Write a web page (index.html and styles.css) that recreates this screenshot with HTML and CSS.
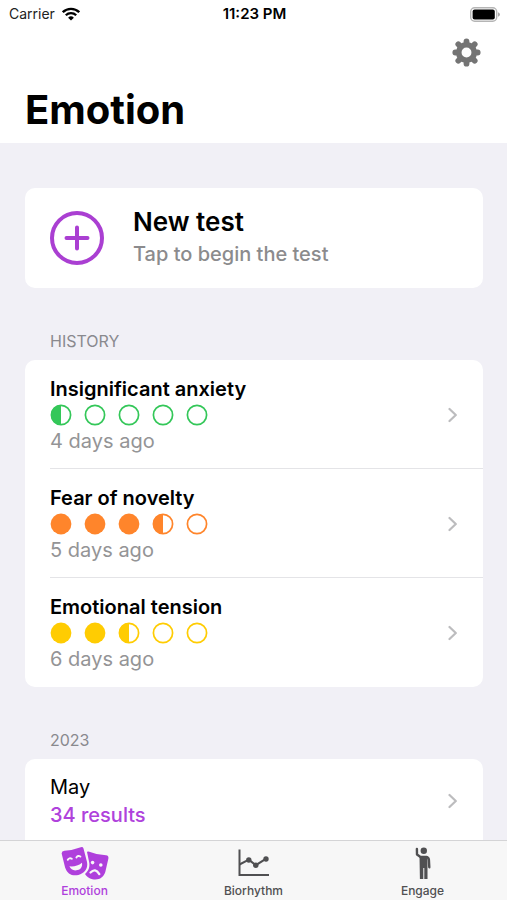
FILE: index.html
```html
<!DOCTYPE html>
<html lang="en">
<head>
<meta charset="utf-8">
<meta name="viewport" content="width=device-width, initial-scale=1">
<title>Emotion</title>
<link rel="stylesheet" href="styles.css">
</head>
<body>
<svg class="defs" aria-hidden="true">
  <symbol id="empty" viewBox="0 0 22 22"><circle cx="11" cy="11" r="9.6" fill="none" stroke="currentColor" stroke-width="1.7"/></symbol>
  <symbol id="half" viewBox="0 0 22 22"><circle cx="11" cy="11" r="9.6" fill="none" stroke="currentColor" stroke-width="1.7"/><path d="M11 1a10 10 0 0 0 0 20z" fill="currentColor"/></symbol>
  <symbol id="full" viewBox="0 0 22 22"><circle cx="11" cy="11" r="10.4" fill="currentColor"/></symbol>
  <symbol id="chevron" viewBox="0 0 10 16"><path d="M1.500 2 7.800 8l-6.300 6" fill="none" stroke="currentColor" stroke-width="2.200" stroke-linecap="round" stroke-linejoin="round"/></symbol>
</svg>
<header class="top">
  <div class="status">
    <span class="carrier">Carrier
      <svg class="wifi" viewBox="0 0 18 14"><g fill="none" stroke="currentColor" stroke-width="2.300"><path d="M.8 5.200a11.600 11.600 0 0 1 16.400 0"/><path d="M3.800 8.300a7.400 7.400 0 0 1 10.400 0"/></g><path d="M9 13.600 6.100 10.700a4.100 4.100 0 0 1 5.800 0z" fill="currentColor"/></svg>
    </span>
    <span class="clock">11:23 PM</span>
    <svg class="battery" viewBox="0 0 30 15"><rect x=".7" y=".7" width="26" height="13.600" rx="4" fill="#fff" stroke="#b5b5b5" stroke-width="1.400"/><rect x="2.600" y="2.600" width="22.200" height="9.800" rx="2"/><path d="M28 5.300q2 .7 2 2.200t-2 2.200z" fill="#aaa"/></svg>
  </div>
  <div class="actions">
    <button class="settings" type="button" aria-label="Settings">
      <svg viewBox="-14 -14 28 28"><g stroke="#747474" stroke-width="5.600" stroke-linecap="round"><path d="M0-10.800V-8M0 10.800V8M-10.800 0H-8M10.800 0H8M-7.900-7.900-6-6M7.900-7.900 6-6M-7.900 7.900-6 6M7.900 7.900 6 6"/></g><circle r="7.500" fill="none" stroke="#747474" stroke-width="5.400"/></svg>
    </button>
  </div>
  <h1>Emotion</h1>
</header>
<main>
  <button class="card new-test" type="button">
    <svg viewBox="0 0 54 54"><g fill="none" stroke="currentColor" stroke-width="4" stroke-linecap="round"><circle cx="27" cy="27" r="25"/><path d="M27 16.500v21M16.500 27h21"/></g></svg>
    <span class="lines"><strong>New test</strong><span class="hint">Tap to begin the test</span></span>
  </button>
  <section>
    <h2>HISTORY</h2>
    <div class="card">
      <a class="row" href="#anxiety">
        <span class="lines"><span class="name">Insignificant anxiety</span>
          <span class="score green"><svg><use href="#half"/></svg><svg><use href="#empty"/></svg><svg><use href="#empty"/></svg><svg><use href="#empty"/></svg><svg><use href="#empty"/></svg></span>
          <span class="ago">4 days ago</span></span>
        <svg class="chevron"><use href="#chevron"/></svg>
      </a>
      <a class="row" href="#novelty">
        <span class="lines"><span class="name">Fear of novelty</span>
          <span class="score orange"><svg><use href="#full"/></svg><svg><use href="#full"/></svg><svg><use href="#full"/></svg><svg><use href="#half"/></svg><svg><use href="#empty"/></svg></span>
          <span class="ago">5 days ago</span></span>
        <svg class="chevron"><use href="#chevron"/></svg>
      </a>
      <a class="row" href="#tension">
        <span class="lines"><span class="name">Emotional tension</span>
          <span class="score yellow"><svg><use href="#full"/></svg><svg><use href="#full"/></svg><svg><use href="#half"/></svg><svg><use href="#empty"/></svg><svg><use href="#empty"/></svg></span>
          <span class="ago">6 days ago</span></span>
        <svg class="chevron"><use href="#chevron"/></svg>
      </a>
    </div>
  </section>
  <section>
    <h2>2023</h2>
    <div class="card">
      <a class="row month" href="#may">
        <span class="lines"><span>May</span><span class="results">34 results</span></span>
        <svg class="chevron"><use href="#chevron"/></svg>
      </a>
    </div>
  </section>
</main>
<nav class="tabs">
  <a class="active" href="#emotion">
    <svg viewBox="0 0 48 34">
      <g fill="currentColor"><path d="M3.500 3.700Q12 3.300 19.800.3q2-.7 2.700 1.200L26 15c1.200 6.500-2 11-8.600 13-6.600 1.400-11.200-1.400-13.300-7.600L.7 6.700q-.3-2.500 2.800-3z"/><path d="M27.500 4.500q8.500 3.500 17.500 3.800 2.900.4 2.400 3.200L44.300 25c-2 5.700-6.400 8.400-12.800 7.200-3.500-.8-6-2.500-7.500-5.200 3.700-3.300 5.300-7.500 4-12.500L26 5q.3-.8 1.500-.5z"/></g>
      <g fill="none" stroke="#f7f7f7" stroke-width="1.900" stroke-linecap="round"><path d="M6.800 12.800q1.400-2.500 4-1M15.400 10.500q1.400-2.500 4-1"/><path d="M29.500 25.500q4.800-5 8.800 1.600" stroke-width="2.300"/></g>
      <path d="M8.400 19.300q7 .8 12.600-3.600c.6 4-1 6.400-4.500 7.400-3.800 1-6.600-.4-8.100-3.800z" fill="#f7f7f7"/><circle cx="31.600" cy="15.600" r="1.800" fill="#f7f7f7"/><circle cx="39.800" cy="18" r="1.800" fill="#f7f7f7"/>
    </svg>
    <span>Emotion</span>
  </a>
  <a href="#biorhythm">
    <svg viewBox="0 0 48 34"><g fill="none" stroke="currentColor" stroke-width="2"><path d="M9.500 2.500v25.500h29.500"/><path d="m9.500 17.500 9.300-4.800 7 5.500 10.400-6.500"/></g><g fill="currentColor"><circle cx="18.800" cy="13" r="2.700"/><circle cx="25.800" cy="18.200" r="2.700"/><circle cx="36" cy="12" r="2.700"/></g></svg>
    <span>Biorhythm</span>
  </a>
  <a href="#engage">
    <svg viewBox="0 0 48 34"><circle cx="24.800" cy="3.800" r="3.200" fill="currentColor"/><path d="M17.900 2 18 7.500l3.500 2.500h6q2 .4 2.400 2.800l.4 7.400" fill="none" stroke="currentColor" stroke-width="2.400" stroke-linecap="round" stroke-linejoin="round"/><path d="M20.500 9h8v23h-3.200V21h-1v11h-3.400z" fill="currentColor"/></svg>
    <span>Engage</span>
  </a>
</nav>
</body>
</html>
```
FILE: styles.css
```css
* { box-sizing: border-box; }
body {
  margin: 0;
  height: 100vh;
  display: flex;
  flex-direction: column;
  background: #f1f0f6;
  color: #000;
  font: 20px/26px Inter, "Liberation Sans", sans-serif;
}
.defs { position: absolute; width: 0; height: 0; }
svg { display: block; flex: none; }
a { color: inherit; text-decoration: none; }
button { border: 0; padding: 0; background: none; font: inherit; color: inherit; text-align: left; }
.top { background: #fff; flex: none; }
.status {
  display: grid;
  grid-template-columns: 1fr auto 1fr;
  align-items: center;
  height: 28px;
  padding: 0 7px 0 9px;
  font-size: 14px;
  line-height: 28px;
}
.carrier { display: flex; align-items: center; gap: 7px; color: #222; }
.wifi { width: 18px; height: 14px; color: #000; }
.clock { font-size: 15px; font-weight: 600; }
.battery { width: 30px; height: 15px; justify-self: end; }
.actions { display: flex; justify-content: flex-end; padding: 10px 26px 0; }
.settings, .settings svg { width: 29px; height: 29px; }
h1 { margin: 0; padding: 18px 25px 9px; font-size: 40px; line-height: 49px; font-weight: 700; }
main { flex: 1; min-height: 0; overflow: hidden; padding: 45px 24px 0 25px; }
.card { background: #fff; border-radius: 10px; }
.lines { display: flex; flex-direction: column; flex: 1; }
.new-test { display: flex; align-items: center; width: 100%; gap: 29px; padding: 17px 24px 18px 25px; }
.new-test > svg { width: 54px; height: 54px; color: #aa3fd2; }
.new-test strong { font-size: 26px; line-height: 33px; font-weight: 600; }
.hint { line-height: 32px; font-weight: 500; color: #8b8b8d; }
h2 { margin: 0; padding: 43px 25px 8px; font-size: 16px; line-height: 21px; font-weight: 400; color: #89898e; }
.row { display: flex; align-items: center; margin-left: 25px; padding: 16px 25px 14px 0; border-bottom: 1px solid #e4e4e7; }
.row:last-child { border-bottom-color: transparent; }
.name { font-weight: 600; }
.score { display: flex; align-items: center; gap: 12px; height: 26px; }
.score svg { width: 22px; height: 22px; }
.green { color: #34c759; }
.orange { color: #ff852b; }
.yellow { color: #ffcc02; }
.ago { color: #949496; }
.chevron { width: 10px; height: 16px; color: #bcbcbe; }
.row.month { align-items: flex-start; padding: 14px 25px 24px 0; }
.month .lines { line-height: 28px; }
.month .chevron { margin-top: 20px; }
.results { font-weight: 500; color: #af42dc; }
.tabs {
  flex: none;
  display: grid;
  grid-template-columns: repeat(3, 1fr);
  height: 60px;
  padding-top: 6px;
  background: #f7f7f7;
  border-top: 1px solid #d4d4d6;
  color: #505052;
  font-size: 12px;
  line-height: 16px;
  font-weight: 500;
}
.tabs a { display: flex; flex-direction: column; align-items: center; gap: 2px; }
.tabs svg { width: 48px; height: 34px; }
.tabs .active { color: #af3fdc; }
```
